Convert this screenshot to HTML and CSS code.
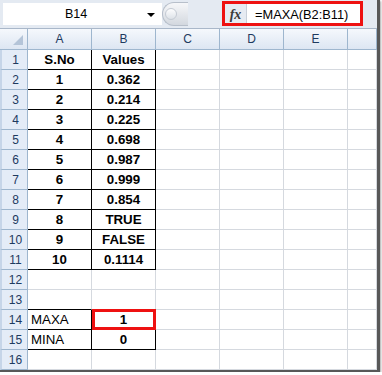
FILE: index.html
```html
<!DOCTYPE html>
<html lang="en">
	<head>
		<meta charset="UTF-8" />
		<meta
			name="viewport"
			content="width=device-width, initial-scale=1.0" />
		<title>MAXA in a worksheet</title>

		<link rel="stylesheet" href="styles.css">
	</head>
	<body>
		<div class="window">
			<div class="formula-bar">
				<div class="name-box">
					<span class="name-box__text">B14</span>
					<span class="name-box__arrow"></span>
				</div>
				<div class="splitter"><span class="splitter__knob"></span></div>
				<div class="formula">
					<span class="formula__fx">fx</span>
					<span class="formula__input">=MAXA(B2:B11)</span>
				</div>
			</div>

			<div class="sheet">
				<div class="row row--head">
					<div class="corner"></div>
					<div class="col-head">A</div>
					<div class="col-head">B</div>
					<div class="col-head">C</div>
					<div class="col-head">D</div>
					<div class="col-head">E</div>
					<div class="col-head"></div>
				</div>
				<div class="row">
					<div class="row-head">1</div>
					<div class="cell cell--box">S.No</div>
					<div class="cell cell--box">Values</div>
					<div class="cell"></div><div class="cell"></div><div class="cell"></div><div class="cell"></div>
				</div>
				<div class="row">
					<div class="row-head">2</div>
					<div class="cell cell--box">1</div>
					<div class="cell cell--box">0.362</div>
					<div class="cell"></div><div class="cell"></div><div class="cell"></div><div class="cell"></div>
				</div>
				<div class="row">
					<div class="row-head">3</div>
					<div class="cell cell--box">2</div>
					<div class="cell cell--box">0.214</div>
					<div class="cell"></div><div class="cell"></div><div class="cell"></div><div class="cell"></div>
				</div>
				<div class="row">
					<div class="row-head">4</div>
					<div class="cell cell--box">3</div>
					<div class="cell cell--box">0.225</div>
					<div class="cell"></div><div class="cell"></div><div class="cell"></div><div class="cell"></div>
				</div>
				<div class="row">
					<div class="row-head">5</div>
					<div class="cell cell--box">4</div>
					<div class="cell cell--box">0.698</div>
					<div class="cell"></div><div class="cell"></div><div class="cell"></div><div class="cell"></div>
				</div>
				<div class="row">
					<div class="row-head">6</div>
					<div class="cell cell--box">5</div>
					<div class="cell cell--box">0.987</div>
					<div class="cell"></div><div class="cell"></div><div class="cell"></div><div class="cell"></div>
				</div>
				<div class="row">
					<div class="row-head">7</div>
					<div class="cell cell--box">6</div>
					<div class="cell cell--box">0.999</div>
					<div class="cell"></div><div class="cell"></div><div class="cell"></div><div class="cell"></div>
				</div>
				<div class="row">
					<div class="row-head">8</div>
					<div class="cell cell--box">7</div>
					<div class="cell cell--box">0.854</div>
					<div class="cell"></div><div class="cell"></div><div class="cell"></div><div class="cell"></div>
				</div>
				<div class="row">
					<div class="row-head">9</div>
					<div class="cell cell--box">8</div>
					<div class="cell cell--box">TRUE</div>
					<div class="cell"></div><div class="cell"></div><div class="cell"></div><div class="cell"></div>
				</div>
				<div class="row">
					<div class="row-head">10</div>
					<div class="cell cell--box">9</div>
					<div class="cell cell--box">FALSE</div>
					<div class="cell"></div><div class="cell"></div><div class="cell"></div><div class="cell"></div>
				</div>
				<div class="row">
					<div class="row-head">11</div>
					<div class="cell cell--box">10</div>
					<div class="cell cell--box">0.1114</div>
					<div class="cell"></div><div class="cell"></div><div class="cell"></div><div class="cell"></div>
				</div>
				<div class="row">
					<div class="row-head">12</div>
					<div class="cell"></div><div class="cell"></div>
					<div class="cell"></div><div class="cell"></div><div class="cell"></div><div class="cell"></div>
				</div>
				<div class="row">
					<div class="row-head">13</div>
					<div class="cell cell--above"></div><div class="cell cell--above"></div>
					<div class="cell"></div><div class="cell"></div><div class="cell"></div><div class="cell"></div>
				</div>
				<div class="row">
					<div class="row-head">14</div>
					<div class="cell cell--box cell--label">MAXA</div>
					<div class="cell cell--box cell--active">1</div>
					<div class="cell"></div><div class="cell"></div><div class="cell"></div><div class="cell"></div>
				</div>
				<div class="row">
					<div class="row-head">15</div>
					<div class="cell cell--box cell--label">MINA</div>
					<div class="cell cell--box">0</div>
					<div class="cell"></div><div class="cell"></div><div class="cell"></div><div class="cell"></div>
				</div>
				<div class="row">
					<div class="row-head">16</div>
					<div class="cell"></div><div class="cell"></div>
					<div class="cell"></div><div class="cell"></div><div class="cell"></div><div class="cell"></div>
				</div>
			</div>
		</div>
	</body>
</html>
```

FILE: styles.css
```css
* {
	box-sizing: border-box;
}
body {
	margin: 0;
	background: #fff;
	font-family: 'Liberation Sans', Arial, sans-serif;
}

.window {
	width: 380px;
	height: 372px;
	border-right: 3px solid #585858;
	border-bottom: 2px solid #585858;
	box-shadow: 1px 1px 2px rgba(0, 0, 0, 0.35);
	overflow: hidden;
	background: #fff;
}

/* formula bar */

.formula-bar {
	display: flex;
	align-items: flex-start;
	height: 29px;
	background: #e4eaf2;
	border-bottom: 1px solid #a9b7c9;
}
.name-box {
	display: flex;
	align-items: center;
	width: 159px;
	height: 22px;
	margin: 3px 0 0 3px;
	background: #fff;
}
.name-box__text {
	flex: 1;
	padding-left: 2px;
	text-align: center;
	font-size: 12.5px;
	color: #000;
}
.name-box__arrow {
	width: 0;
	height: 0;
	margin: 1px 7px 0 0;
	border-left: 4px solid transparent;
	border-right: 4px solid transparent;
	border-top: 4px solid #000;
}
.splitter {
	display: flex;
	align-items: center;
	width: 26px;
	height: 24px;
	margin-top: 2px;
	padding-left: 2px;
	border: 1px solid #b7bfca;
	border-right: none;
	border-radius: 12px 0 0 12px;
	background: linear-gradient(#f6f7f9, #d3d8df);
}
.splitter__knob {
	width: 12px;
	height: 12px;
	border-radius: 50%;
	background: linear-gradient(#fdfdfe, #dde2e8);
	border: 1px solid #c4cad3;
}
.formula {
	display: flex;
	width: 141px;
	height: 25px;
	margin: 1px 0 0 34px;
	border: 3px solid #ee1111;
	background: #fff;
}
.formula__fx {
	width: 22px;
	padding-top: 3px;
	text-align: center;
	font-family: 'Liberation Serif', 'Times New Roman', serif;
	font-style: italic;
	font-weight: bold;
	font-size: 14px;
	color: #3a3a3a;
	background: #e6ebf2;
	border-right: 1px solid #c8cfd9;
}
.formula__input {
	flex: 1;
	padding: 3px 0 0 8px;
	font-size: 12.8px;
	color: #000;
}

/* sheet */

.row {
	display: grid;
	grid-template-columns: 28px repeat(5, 64px) 1fr;
	height: 20px;
}
.row--head {
	height: 21px;
}
.corner,
.col-head {
	position: relative;
	display: flex;
	align-items: center;
	justify-content: center;
	font-size: 12px;
	color: #1e3a5f;
	background: linear-gradient(#f5f8fc, #dde6f2);
	border-right: 1px solid #9eb6ce;
	border-bottom: 1px solid #9eb6ce;
}
.corner::after {
	content: '';
	position: absolute;
	right: 4px;
	bottom: 4px;
	width: 10px;
	height: 10px;
	background: #b4c4d8;
	clip-path: polygon(100% 0, 100% 100%, 0 100%);
}
.row-head {
	display: flex;
	align-items: center;
	justify-content: center;
	padding-left: 2px;
	font-size: 12px;
	color: #1e3a5f;
	background: #e4ecf7;
	border-left: 2px solid #c6d5e8;
	border-right: 1px solid #9eb6ce;
	border-bottom: 1px solid #9eb6ce;
}
.cell {
	display: flex;
	align-items: center;
	justify-content: center;
	font-size: 13.3px;
	font-weight: bold;
	color: #000;
	border-right: 1px solid #d5d9df;
	border-bottom: 1px solid #d5d9df;
}
.cell--box {
	border-right-color: #000;
	border-bottom-color: #000;
}
.cell--above {
	border-bottom-color: #000;
}
.cell--label {
	justify-content: flex-start;
	padding-left: 3px;
	font-weight: normal;
}
.cell--active {
	position: relative;
}
.cell--active::after {
	content: '';
	position: absolute;
	top: -1px;
	left: 0;
	right: -1px;
	bottom: -1px;
	border: 3px solid #ee1111;
}
```
